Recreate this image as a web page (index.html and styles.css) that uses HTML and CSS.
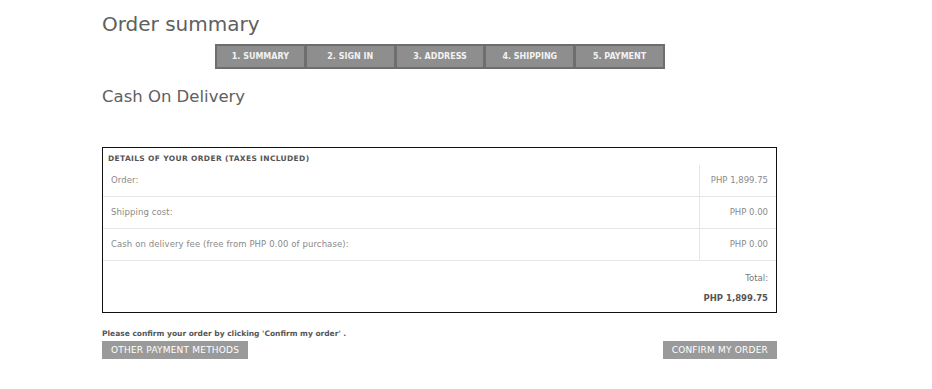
FILE: index.html
```html
<!DOCTYPE html>
<html>
<head>
  <meta charset='UTF-8'>
  <title>Order summary</title>
  <link rel="stylesheet" href="styles.css">
</head>
<body>
  <div class='pagina'>
    <h1 class='titulo'>Order summary</h1>

    <ul class='passos'>
      <li>1. SUMMARY</li>
      <li>2. SIGN IN</li>
      <li>3. ADDRESS</li>
      <li>4. SHIPPING</li>
      <li>5. PAYMENT</li>
    </ul>

    <h2 class='subtitulo'>Cash On Delivery</h2>

    <div class='caixa'>
      <div class='cabecalho'>DETAILS OF YOUR ORDER (TAXES INCLUDED)</div>
      <div class='linha'><span class='rotulo'>Order:</span><span class='valor'>PHP 1,899.75</span></div>
      <div class='linha'><span class='rotulo'>Shipping cost:</span><span class='valor'>PHP 0.00</span></div>
      <div class='linha'><span class='rotulo'>Cash on delivery fee (free from PHP 0.00 of purchase):</span><span class='valor'>PHP 0.00</span></div>
      <div class='total'>
        <span class='total_rotulo'>Total:</span>
        <span class='total_valor'>PHP 1,899.75</span>
      </div>
    </div>

    <p class='aviso'>Please confirm your order by clicking 'Confirm my order' .</p>
    <div class='acoes'>
      <button class='botao'>OTHER PAYMENT METHODS</button>
      <button class='botao'>CONFIRM MY ORDER</button>
    </div>
  </div>
</body>
</html>
```

FILE: styles.css
```css
body { margin: 0; background: #fff; font-family: "DejaVu Sans", sans-serif; color: #555; }
.pagina { width: 675px; margin-left: 102px; padding-top: 11px; }
.titulo { font-size: 20px; font-weight: normal; color: #606060; margin: 0; line-height: 26px; }
.passos { list-style: none; margin: 7px 0 0 113px; padding: 2px; width: 446px; display: flex; gap: 3px; background: #6e6e6e; }
.passos li { flex: 1; height: 21px; line-height: 22px; text-align: center; background: #8e8e8e; color: #f2f2f2; font-size: 8px; font-weight: bold; }
.subtitulo { font-size: 16.5px; font-weight: normal; color: #606060; margin: 17px 0 0 0; line-height: 22px; }
.caixa { margin-top: 39px; border: 1px solid #111; padding-bottom: 6px; }
.cabecalho { font-size: 7.5px; font-weight: bold; letter-spacing: 0.35px; color: #555; padding: 6px 0 0 5px; height: 11px; }
.linha { display: flex; height: 31px; border-bottom: 1px solid #e6e6e6; font-size: 8.5px; color: #8a8a8a; }
.rotulo { flex: 1; padding-left: 8px; line-height: 31px; letter-spacing: 0.1px; }
.valor { width: 68px; padding-right: 8px; text-align: right; line-height: 31px; border-left: 1px solid #e6e6e6; }
.total { display: flex; flex-direction: column; align-items: flex-end; padding: 10px 8px 0 0; font-size: 8.5px; }
.total_rotulo { color: #777; line-height: 15px; }
.total_valor { font-weight: bold; color: #555; line-height: 15px; margin-top: 5px; }
.aviso { font-size: 7.5px; font-weight: bold; color: #555; margin: 15px 0 0 0; line-height: 12px; }
.acoes { display: flex; justify-content: space-between; margin-top: 1px; }
.botao { font-family: "DejaVu Sans", sans-serif; font-size: 9px; letter-spacing: 0.2px; color: #fff; background: #9a9a9a; border: none; border-radius: 0; height: 18px; padding: 0 9px; }
```
